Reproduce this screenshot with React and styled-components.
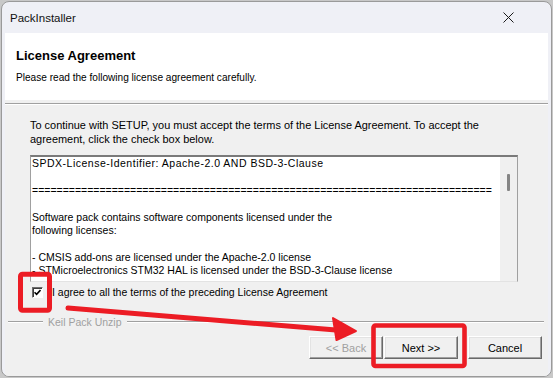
import React from "react";
import styled, { createGlobalStyle } from "styled-components";

const GlobalStyle = createGlobalStyle`
  html, body {
    margin: 0;
    padding: 0;
    background: #c8c8c8;
  }
  body {
    width: 553px;
    height: 378px;
    overflow: hidden;
  }
`;

const Window = styled.div`
  position: relative;
  box-sizing: border-box;
  width: 551px;
  height: 376px;
  margin: 1px 0 0 1px;
  border: 1px solid #9a9a9a;
  border-radius: 8px;
  background: #eff0f6;
  overflow: hidden;
  display: flex;
  flex-direction: column;
  font-family: "Liberation Sans", Arial, sans-serif;
  color: #000;
`;

const TitleBar = styled.div`
  height: 31px;
  flex: none;
  display: flex;
  align-items: center;
  justify-content: space-between;
  padding: 0 37px 0 8px;
  font-size: 11.5px;
  color: #111;
`;

const Client = styled.div`
  flex: 1;
  margin: 0 3px 0 3px;
  background: #f0f0f0;
  display: flex;
  flex-direction: column;
`;

const Header = styled.div`
  height: 67px;
  box-sizing: border-box;
  background: #fff;
  padding: 15px 11px 0;
`;

const HeaderTitle = styled.div`
  font-weight: bold;
  font-size: 13px;
  line-height: 15px;
`;

const HeaderText = styled.div`
  margin-top: 8px;
  font-size: 10.1px;
  line-height: 13px;
`;

const Etched = styled.div`
  margin-top: 3px;
  border-top: 1px solid #a0a0a0;
  border-bottom: 1px solid #fff;
`;

const Body = styled.div`
  padding: 13px 0 0 25px;
  font-size: 10.95px;
  line-height: 14px;
`;

const Intro = styled.div`
  width: 490px;
`;

const TextBox = styled.div`
  margin-top: 9px;
  width: 488px;
  height: 127px;
  box-sizing: border-box;
  border-style: solid;
  border-width: 2px 1px 1px 1px;
  border-color: #7a7a7a #a0a0a0 #e3e3e3 #a0a0a0;
  background: #fff;
  display: flex;
`;

const TextArea = styled.div`
  flex: 1;
  padding: 0 1px;
  white-space: pre;
  overflow: hidden;
  font-size: 10.5px;
  line-height: 13.4px;
`;

const WideLine = styled.span`
  letter-spacing: 0.5px;
`;

const ScrollBar = styled.div`
  width: 17px;
  flex: none;
  background: #f0f0f0;
  position: relative;
`;

const Thumb = styled.div`
  position: absolute;
  left: 7px;
  top: 17px;
  width: 3px;
  height: 17px;
  border-radius: 1px;
  background: #858585;
`;

const CheckRow = styled.label`
  margin-top: 3px;
  display: flex;
  align-items: center;
  gap: 9px;
  padding-left: 2px;
  font-size: 10.5px;
`;

const Check = styled.span`
  width: 11px;
  height: 11px;
  box-sizing: border-box;
  border-style: solid;
  border-width: 1px;
  border-color: #6d6d6d #fff #fff #6d6d6d;
  box-shadow: inset 1px 1px 0 #3c3c3c;
  background: #fff;
  display: flex;
  align-items: center;
  justify-content: center;
`;

const GroupLine = styled.div`
  margin: 17px 4px 0 3px;
  display: flex;
  align-items: center;
  gap: 5px;
  font-size: 10.5px;
  color: #a0a0a0;
  &::before,
  &::after {
    content: "";
    height: 0;
    border-top: 1px solid #a0a0a0;
    border-bottom: 1px solid #fff;
  }
  &::before {
    width: 35px;
  }
  &::after {
    flex: 1;
  }
`;

const ButtonRow = styled.div`
  margin-top: 8px;
  display: flex;
  justify-content: flex-end;
  padding-right: 6px;
`;

const Button = styled.button`
  width: 74px;
  height: 23px;
  margin-left: ${(p) => p.$gap || 0}px;
  box-sizing: border-box;
  padding: 0;
  font-family: "Liberation Sans", Arial, sans-serif;
  font-size: 11px;
  color: ${(p) => (p.disabled ? "#a0a0a0" : "#000")};
  background: #f0f0f0;
  border-style: solid;
  border-width: 1px;
  border-color: #fff #696969 #696969 #fff;
  box-shadow: inset -1px -1px 0 #a0a0a0, inset 1px 1px 0 #e3e3e3;
`;

const Overlay = styled.svg`
  position: absolute;
  left: -2px;
  top: -2px;
  pointer-events: none;
`;

const licenseRest = `

${"=".repeat(75)}

Software pack contains software components licensed under the
following licenses:

- CMSIS add-ons are licensed under the Apache-2.0 license
- STMicroelectronics STM32 HAL is licensed under the BSD-3-Clause license`;

export default function App() {
  return (
    <>
      <GlobalStyle />
      <Window>
        <TitleBar>
          <span>PackInstaller</span>
          <svg width="11" height="11" viewBox="0 0 11 11">
            <path d="M0.5 0.5 L10.5 10.5 M10.5 0.5 L0.5 10.5" stroke="#1a1a1a" strokeWidth="1" />
          </svg>
        </TitleBar>
        <Client>
          <Header>
            <HeaderTitle>License Agreement</HeaderTitle>
            <HeaderText>Please read the following license agreement carefully.</HeaderText>
          </Header>
          <Etched />
          <Body>
            <Intro>
              To continue with SETUP, you must accept the terms of the License Agreement. To accept the
              agreement, click the check box below.
            </Intro>
            <TextBox>
              <TextArea>
                <WideLine>SPDX-License-Identifier: Apache-2.0 AND BSD-3-Clause</WideLine>
                {licenseRest}
              </TextArea>
              <ScrollBar>
                <Thumb />
              </ScrollBar>
            </TextBox>
            <CheckRow>
              <Check>
                <svg width="7" height="7" viewBox="0 0 7 7">
                  <path d="M0.5 3.2 L2.6 5.4 L6.5 1" stroke="#000" strokeWidth="1.6" fill="none" />
                </svg>
              </Check>
              <span>I agree to all the terms of the preceding License Agreement</span>
            </CheckRow>
          </Body>
          <GroupLine>Keil Pack Unzip</GroupLine>
          <ButtonRow>
            <Button disabled>&lt;&lt; Back</Button>
            <Button $gap={1}>Next &gt;&gt;</Button>
            <Button $gap={10}>Cancel</Button>
          </ButtonRow>
        </Client>
        <Overlay width="553" height="378" viewBox="0 0 553 378">
          <rect x="20.5" y="274.3" width="29" height="36" rx="2" fill="none" stroke="#ec1c24" strokeWidth="5" />
          <rect x="373.5" y="325.5" width="91" height="40.5" rx="2" fill="none" stroke="#ec1c24" strokeWidth="4.6" />
          <path d="M68 308 L342 330.6" stroke="#ec1c24" strokeWidth="5" strokeLinecap="round" />
          <path d="M356 331 L333 318 L336.5 340 Z" fill="#ec1c24" stroke="#ec1c24" strokeWidth="2" strokeLinejoin="round" />
        </Overlay>
      </Window>
    </>
  );
}
